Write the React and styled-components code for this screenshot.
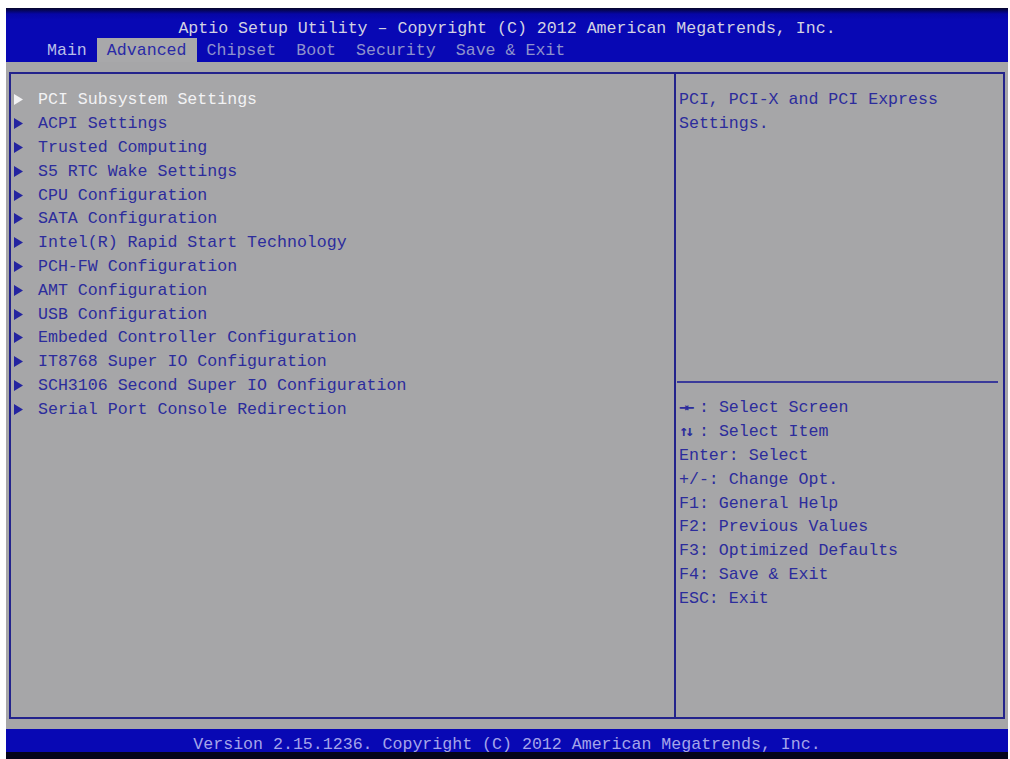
import React from "react";
import styled, { createGlobalStyle } from "styled-components";

const GlobalStyle = createGlobalStyle`
  html, body {
    margin: 0;
    padding: 0;
    background: #ffffff;
  }
  body {
    font-family: "Liberation Mono", "DejaVu Sans Mono", monospace;
  }
`;

const Screen = styled.div`
  margin: 8px 0 0 6px;
  width: 1002px;
  height: 751px;
  display: flex;
  flex-direction: column;
  font-family: "Liberation Mono", "DejaVu Sans Mono", monospace;
  font-size: 16.6px;
  background: #a6a6a8;
`;

const Header = styled.div`
  height: 54px;
  background: linear-gradient(#05052a 0px, #0606a6 6px, #0808b4 12px, #0808b4 100%);
  display: flex;
  flex-direction: column;
`;

const Title = styled.div`
  height: 30px;
  line-height: 42px;
  text-align: center;
  color: #d2d2e2;
  white-space: pre;
`;

const Tabs = styled.div`
  display: flex;
  height: 24px;
  padding-left: 31px;
  align-items: stretch;
`;

const Tab = styled.div`
  padding: 0 10px;
  line-height: 25px;
  white-space: pre;
  color: ${(p) => (p.$active ? "#2a2aa6" : p.$dim ? "#8e92cc" : "#b8bee8")};
  background: ${(p) => (p.$active ? "#a8a8aa" : "transparent")};
`;

const Body = styled.div`
  flex: 1;
  padding: 10px 3px 10px 3px;
  display: flex;
`;

const Box = styled.div`
  flex: 1;
  display: flex;
  border: 2px solid #23238c;
`;

const LeftPane = styled.div`
  width: 663px;
  border-right: 2px solid #23238c;
  padding: 14px 0 0 0;
`;

const Item = styled.div`
  display: flex;
  align-items: center;
  height: 23.8px;
  padding-left: 3px;
  color: ${(p) => (p.$selected ? "#f2f2f4" : "#2c2c9c")};
  white-space: pre;
`;

const Arrow = styled.svg`
  width: 9px;
  height: 11px;
  margin-right: 15px;
  flex: none;
`;

const RightPane = styled.div`
  flex: 1;
  display: flex;
  flex-direction: column;
`;

const HelpText = styled.div`
  height: 307px;
  padding: 14px 0 0 3px;
  color: #2c2c9c;
  line-height: 23.8px;
  box-sizing: border-box;
`;

const Rule = styled.div`
  height: 2px;
  margin: 0 5px 0 1px;
  background: #3a3a9a;
`;

const Keys = styled.div`
  padding: 13px 0 0 3px;
`;

const Key = styled.div`
  height: 23.9px;
  line-height: 23.9px;
  color: #2c2c9c;
  white-space: pre;
`;

const KeyGlyph = styled.span`
  display: inline-block;
  width: 20px;
  font-family: "DejaVu Sans Mono", monospace;
  font-weight: bold;
  font-size: 15px;
  letter-spacing: -3px;
`;

const Footer = styled.div`
  height: 23px;
  background: #0808b4;
  color: #a4a4ea;
  text-align: center;
  line-height: 31px;
  white-space: pre;
  border-bottom: 7px solid #04041a;
`;

const items = [
  "PCI Subsystem Settings",
  "ACPI Settings",
  "Trusted Computing",
  "S5 RTC Wake Settings",
  "CPU Configuration",
  "SATA Configuration",
  "Intel(R) Rapid Start Technology",
  "PCH-FW Configuration",
  "AMT Configuration",
  "USB Configuration",
  "Embeded Controller Configuration",
  "IT8768 Super IO Configuration",
  "SCH3106 Second Super IO Configuration",
  "Serial Port Console Redirection",
];

const keys = [
  { glyph: "→←", text: ": Select Screen" },
  { glyph: "↑↓", text: ": Select Item" },
  { text: "Enter: Select" },
  { text: "+/-: Change Opt." },
  { text: "F1: General Help" },
  { text: "F2: Previous Values" },
  { text: "F3: Optimized Defaults" },
  { text: "F4: Save & Exit" },
  { text: "ESC: Exit" },
];

const tabs = ["Main", "Advanced", "Chipset", "Boot", "Security", "Save & Exit"];

export default function App() {
  return (
    <>
      <GlobalStyle />
      <Screen>
        <Header>
          <Title>Aptio Setup Utility – Copyright (C) 2012 American Megatrends, Inc.</Title>
          <Tabs>
            {tabs.map((t, i) => (
              <Tab key={t} $active={i === 1} $dim={i > 1}>
                {t}
              </Tab>
            ))}
          </Tabs>
        </Header>
        <Body>
          <Box>
            <LeftPane>
              {items.map((name, i) => (
                <Item key={name} $selected={i === 0}>
                  <Arrow viewBox="0 0 9 11">
                    <polygon points="0,0 9,5.5 0,11" fill={i === 0 ? "#f2f2f4" : "#2424a0"} />
                  </Arrow>
                  {name}
                </Item>
              ))}
            </LeftPane>
            <RightPane>
              <HelpText>
                PCI, PCI-X and PCI Express
                <br />
                Settings.
              </HelpText>
              <Rule />
              <Keys>
                {keys.map((k) => (
                  <Key key={k.text}>
                    {k.glyph && <KeyGlyph>{k.glyph}</KeyGlyph>}
                    {k.text}
                  </Key>
                ))}
              </Keys>
            </RightPane>
          </Box>
        </Body>
        <Footer>Version 2.15.1236. Copyright (C) 2012 American Megatrends, Inc.</Footer>
      </Screen>
    </>
  );
}
